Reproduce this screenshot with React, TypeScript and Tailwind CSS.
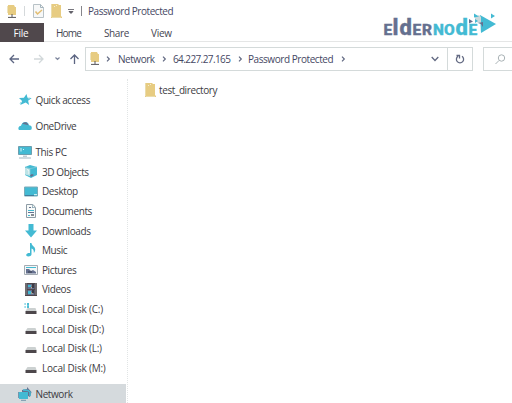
import type { ReactNode } from 'react';

const teal = '#43bad3';
const slate = '#65708f';
const sand = '#e7cc82';
const dark = '#4d474b';

const Svg = ({ w, h, children }: { w: number; h: number; children: ReactNode }) => (
  <svg width={w} height={h} viewBox={`0 0 ${w} ${h}`} fill="none" className="block shrink-0">
    {children}
  </svg>
);

const NetFolder = () => (
  <Svg w={10} h={13}>
    <path d="M1 0h6l1 2h1v8H1z" fill={sand} />
    <path d="M0 1h1v7H0z" fill="#eee3bd" />
    <path d="M5 9v3M1 12.4h8" stroke="#56545a" />
  </Svg>
);

const Folder = () => (
  <Svg w={11} h={14}>
    <path d="M0 0h7l1 1h2v11l1 1v1H0z" fill={sand} />
    <path d="M.5 0v13M1 13.5h9" stroke="#eadcac" />
    <path d="M3 2.5h1M5 1.5h1" stroke="#f5edcf" />
  </Svg>
);

const DocCheck = () => (
  <Svg w={11} h={14}>
    <path d="M.5.5h7l3 3v10H.5z" fill="#f7f8f8" stroke="#b8c2c7" />
    <path d="M7.5.5v3h3" stroke="#a4b4bd" />
    <path d="M2.5 7.5l2 2.5 4.5-4" stroke="#e2bd71" strokeWidth="1.5" />
  </Svg>
);

const Star = () => (
  <Svg w={14} h={13}>
    <path d="M8.5 1l1 3.7 4.2.3-3.6 2.7 1 4.3-3.4-2.4L2.2 12l1.9-4L1 5l4.9-.3z" fill={teal} />
    <path d="M10 6l2-1M3 9l-1 2" stroke="#99d9e3" />
  </Svg>
);

const Cloud = () => (
  <Svg w={14} h={13}>
    <path d="M1 11Q0 10 .5 8.5 1 6.8 3 6.8 4 3 7.2 3q3 0 3.8 3.3 2.8.2 2.8 2.7Q14 11 12 11z" fill={teal} />
    <path d="M4.2 4.7Q6 2.5 8.8 3.5l1.8 2.8-2-.6z" fill={slate} />
  </Svg>
);

const Pc = () => (
  <Svg w={14} h={14}>
    <path d="M.5 1.5h13v8H.5z" fill={teal} stroke="#6d9eae" />
    <path d="M3 3v3.5M5 4.5h1" stroke="#d8f3f5" />
    <path d="M5 11.2h4M1 13h12" stroke="#a2b6c1" />
  </Svg>
);

const Cube = () => (
  <Svg w={14} h={13}>
    <path d="M1 2l5-2 7 2v8l-6 3-6-3z" fill={teal} />
    <path d="M1 2.8l5 1V11L1 9.5z" fill="#bce3e7" />
    <path d="M3 4.5l2 1V9" stroke="#f2f8f7" />
    <path d="M6 10l2-1 2 1-3 2z" fill={slate} />
    <path d="M1 2l5 1.7L13 2M6 3.7V10" stroke="#8ccbd7" strokeWidth=".7" />
  </Svg>
);

const DesktopIcon = () => (
  <Svg w={14} h={13}>
    <path d="M.5 2h13v9H.5z" fill={teal} stroke="#7aabb9" />
    <path d="M1 10.5h9" stroke="#437d9c" />
    <path d="M10 9.5h3" stroke="#c9edf0" />
  </Svg>
);

const DocIcon = () => (
  <Svg w={14} h={14}>
    <path d="M2.5.5h6.5l2.5 3v10h-9z" fill="#f7faf9" stroke="#8e9ca6" />
    <path d="M5 3.5h2m1 0h1M4 8.5h6" stroke={slate} />
    <path d="M4 6.5h6M4 11.5h2" stroke={teal} />
    <path d="M7 11h3" stroke="#5e6671" strokeWidth="1.5" />
    <path d="M8.5.5v3h3" stroke="#9fb8c2" />
  </Svg>
);

const Down = () => (
  <Svg w={14} h={14}>
    <path d="M4.5 0h5v6.5H13L7 13.5 1 6.5h3.5z" fill={teal} />
  </Svg>
);

const Music = () => (
  <Svg w={14} h={14}>
    <path d="M6 0h1.5c0 3 3.7 3.3 3.7 6.5 0 1.7-.6 2.5-1.3 3.5 0-3-.8-4-2.4-4.5v5.8c0 1.4-1.7 2.2-3.2 2.2-1.8 0-2.3-1-2-2 .4-1.4 2.2-1.8 3.7-1.5z" fill={teal} />
  </Svg>
);

const Picture = () => (
  <Svg w={14} h={12}>
    <path d="M.5 1.5h13v9H.5z" fill="#f5f7f7" stroke="#a4acb3" />
    <path d="M2 3.5h10" stroke={teal} />
    <path d="M2 5h3l2 2 2-1 3 2v1.5H2z" fill={slate} />
    <path d="M4 8h4" stroke="#343b49" />
  </Svg>
);

const Video = () => (
  <Svg w={14} h={13}>
    <path d="M1 0h12v13H1z" fill={dark} />
    <path d="M2 .5v12M12 .5v12" stroke="#dae0e0" strokeDasharray="1 1" />
    <path d="M3.5 1h7v5h-7zM3.5 7h7v5h-7z" fill={slate} />
    <path d="M4 2h3v2H4zM4 8h3v3H4z" fill={teal} />
    <path d="M8 2l1 2-2 1M7 10h2" stroke="#dccc9a" />
    <path d="M8 1h2v4H8zM8 7h2v3H8z" fill="#3d3b44" />
  </Svg>
);

const Disk = ({ system = false }: { system?: boolean }) => (
  <Svg w={14} h={14}>
    {system && <path d="M.5 2h1.2M3 2h2M.5 5h1.2M3 5h2M4 1v5" stroke={teal} strokeWidth="1.5" />}
    <path d="M3.5 6h8l1 3h-11z" fill="#ccd1d1" />
    <path d="M1.5 9h11v3h-11z" fill={dark} />
  </Svg>
);

const NetIcon = () => (
  <Svg w={14} h={14}>
    <path d="M4 3l5-1V0l4.5 5L12 10 8 8H4z" fill={slate} />
    <path d="M1 5h9v7H1z" fill={teal} />
    <path d="M5 3l5 .5L12 5v4" stroke={teal} strokeWidth="1.5" />
    <path d="M.5 5v6M3 13.3h5" stroke="#7495ac" />
  </Svg>
);

const Chevron = () => (
  <Svg w={5} h={6}>
    <path d="M1 .7L3.3 3 1 5.3" stroke="#626982" strokeWidth="1.2" />
  </Svg>
);

const children: [string, ReactNode][] = [
  ['3D Objects', <Cube />],
  ['Desktop', <DesktopIcon />],
  ['Documents', <DocIcon />],
  ['Downloads', <Down />],
  ['Music', <Music />],
  ['Pictures', <Picture />],
  ['Videos', <Video />],
  ['Local Disk (C:)', <Disk system />],
  ['Local Disk (D:)', <Disk />],
  ['Local Disk (L:)', <Disk />],
  ['Local Disk (M:)', <Disk />],
];

const Root = ({ icon, label }: { icon: ReactNode; label: string }) => (
  <div className="flex h-[19px] items-center gap-[3.5px] pl-[18px]">
    {icon}
    <span>{label}</span>
  </div>
);

const Logo = () => (
  <Svg w={116} h={28}>
    <g fontFamily="Roboto, sans-serif" fontWeight="800" strokeWidth=".4">
      <text y="23" fontSize="15.5" fill={slate} stroke={slate}>
        <tspan x="1.5">E</tspan>
        <tspan x="10.5 17.5" fontSize="22">ld</tspan>
        <tspan x="30.5 40">ER</tspan>
      </text>
      <text y="23" fontSize="15.5" fill={teal} stroke={teal}>
        <tspan x="51 62">NO</tspan>
        <tspan x="73.5" fontSize="22">d</tspan>
        <tspan x="86.5">E</tspan>
      </text>
    </g>
    <path d="M98 3l16 9-15 9z" fill={teal} />
    <path d="M93 5l4-2 2 2v6h-3l-3-3z" fill="#ccd9dc" />
    <path d="M92 1.5l5 3-5 1zM93 7l3 2-3 2zM109 1.5l4 2.5-4 2.5z" fill={teal} />
    <path d="M87 7l4 2.5-4 2zM96 11l5-1v5l-2-3z" fill={slate} />
  </Svg>
);

export default function App() {
  return (
    <div className="relative flex h-[403px] w-[512px] flex-col overflow-hidden bg-white font-['Open_Sans',sans-serif] text-[10px] leading-[14px] tracking-[-0.4px] whitespace-nowrap text-[#3d3b42]">
      <header className="flex h-[23px] items-center pb-[1px] pl-[7px]">
        <NetFolder />
        <div className="ml-[7px] h-[10px] w-px bg-[#d5d9db]" />
        <div className="ml-[8px]"><DocCheck /></div>
        <div className="ml-[7px]"><Folder /></div>
        <div className="ml-[6px]">
          <Svg w={6} h={5}><path d="M0 .5h6M1 2.5h4L3 4.5z" stroke="#55545d" fill="#55545d" strokeWidth=".8" /></Svg>
        </div>
        <div className="ml-[7px] h-[10px] w-px bg-[#85858b]" />
        <span className="ml-[6px] tracking-[-0.44px] text-[#454763]">Password Protected</span>
      </header>
      <nav className="flex h-[19px] border-b border-[#e5e6e6] tracking-[-0.8px] text-[#454552]">
        <div className="flex h-[19px] w-[44px] items-center justify-center bg-[#50484c] pr-[2px] tracking-[-0.2px] text-white">File</div>
        <span className="ml-[12px] w-[48px] pt-[3px]">Home</span>
        <span className="w-[47px] pt-[3px] tracking-[-0.4px]">Share</span>
        <span className="pt-[3px] tracking-[-0.3px]">View</span>
      </nav>
      <div className="flex h-[33px] items-start pt-[5px] pl-[9px]">
        <div className="flex h-[24px] w-[76px] shrink-0 items-center">
          <Svg w={72} h={12}>
            <path d="M10 6H1M5 2L1 6l4 4" stroke="#5c6582" strokeWidth="1.3" />
            <path d="M25 6h9M30 2l4 4-4 4" stroke="#d2d8da" strokeWidth="1.3" />
            <path d="M46.5 4.5l2 2 2-2" stroke="#7d859c" strokeWidth="1.2" />
            <path d="M65.5 11V2M61.5 6l4-4 4 4" stroke="#5c6582" strokeWidth="1.3" />
          </Svg>
        </div>
        <div className="flex h-[24px] w-[388px] shrink-0 items-center border border-[#d4dada] text-[#454763]">
          <div className="mb-[2px] ml-[4px]"><NetFolder /></div>
          <div className="ml-[6px]"><Chevron /></div>
          <span className="ml-[7px] w-[44px] tracking-[-0.45px]">Network</span>
          <Chevron />
          <span className="ml-[6px] w-[65px] tracking-[-0.6px]">64.227.27.165</span>
          <Chevron />
          <span className="ml-[5px] w-[93px] tracking-[-0.44px]">Password Protected</span>
          <Chevron />
          <div className="ml-auto flex h-full w-[25px] items-center pl-[9px]">
            <Svg w={8} h={6}><path d="M.7 1L4 4.5 7.3 1" stroke="#626982" strokeWidth="1.3" /></Svg>
          </div>
          <div className="flex h-full w-[25px] items-center justify-center border-l border-[#d4dada]">
            <Svg w={10} h={11}>
              <path d="M7 2.3A3.6 3.6 0 1 1 3 2.3M1.5 1.5h3v3" stroke="#626982" strokeWidth="1.3" />
            </Svg>
          </div>
        </div>
        <div className="ml-[10px] flex h-[24px] w-[40px] shrink-0 items-center border border-[#d4dada] pl-[11px]">
          <Svg w={11} h={11}>
            <circle cx="6.5" cy="4" r="3.2" stroke="#a9b2b5" />
            <path d="M4 6.5L.5 10" stroke="#a9b2b5" />
          </Svg>
        </div>
      </div>
      <main className="flex min-h-0 flex-1">
        <aside className="flex w-[126px] flex-col pt-[15px]">
          <div className="mb-[1px] flex flex-col gap-[7px]">
            <Root icon={<Star />} label="Quick access" />
            <Root icon={<Cloud />} label="OneDrive" />
            <Root icon={<Pc />} label="This PC" />
          </div>
          {children.map(([label, icon]) => (
            <div key={label} className="flex h-[19.6px] shrink-0 items-center gap-[4px] pl-[24px]">
              {icon}
              <span className={label.startsWith('Local') ? 'tracking-[-0.2px]' : ''}>{label}</span>
            </div>
          ))}
          <div className="mt-auto bg-[#d5dadd]">
            <Root icon={<NetIcon />} label="Network" />
          </div>
        </aside>
        <div className="mt-[4px] ml-[1px] w-px border-l border-dotted border-[#e1e5e5]" />
        <section className="flex h-[30px] items-center gap-[3px] pl-[17px]">
          <Folder />
          <span>test_directory</span>
        </section>
      </main>
      <div className="absolute top-[12px] left-[382px]"><Logo /></div>
    </div>
  );
}
